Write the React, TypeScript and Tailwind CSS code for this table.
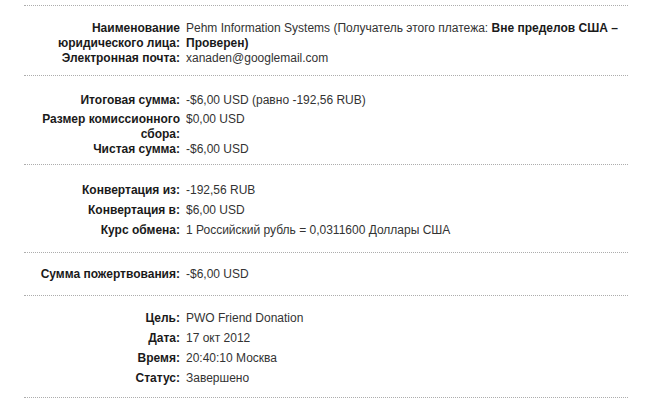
import React, { FC, ReactNode } from 'react';

type RowProps = {
  label: ReactNode;
  children: ReactNode;
  className?: string;
};

const Row: FC<RowProps> = ({ label, children, className = 'leading-[20px]' }) => (
  <div className={`flex ${className}`}>
    <div className="w-[156px] shrink-0 text-right font-bold text-[#1a1a1a]">{label}</div>
    <div className="flex-1 pl-[6px] text-[#333]">{children}</div>
  </div>
);

const App: FC = () => {
  return (
    <div
      className="min-h-[405px] bg-white pt-[5px] pl-[24px] text-[12px]"
      style={{ fontFamily: '"Liberation Sans", Arial, sans-serif' }}
    >
      <div className="w-[604px] border-b border-dotted border-[#adadad]">
        <section className="border-t border-dotted border-[#adadad] pt-[15px] pb-[9px]">
          <Row label="Наименование юридического лица:" className="leading-[15px]">
            Pehm Information Systems (Получатель этого платежа:{' '}
            <b className="text-[#1a1a1a]">Вне пределов США –</b> <b className="text-[#1a1a1a]">Проверен)</b>
          </Row>
          <Row label="Электронная почта:" className="leading-[15px]">
            xanaden@googlemail.com
          </Row>
        </section>

        <section className="border-t border-dotted border-[#adadad] pt-[14px] pb-[7px]">
          <Row label="Итоговая сумма:">-$6,00 USD (равно -192,56 RUB)</Row>
          <Row label="Размер комиссионного сбора:" className="leading-[15px] pt-[2px]">
            $0,00 USD
          </Row>
          <Row label="Чистая сумма:" className="leading-[15px]">
            -$6,00 USD
          </Row>
        </section>

        <section className="border-t border-dotted border-[#adadad] pt-[15px] pb-[12px]">
          <Row label="Конвертация из:">-192,56 RUB</Row>
          <Row label="Конвертация в:">$6,00 USD</Row>
          <Row label="Курс обмена:">1 Российский рубль = 0,0311600 Доллары США</Row>
        </section>

        <section className="border-t border-dotted border-[#adadad] pt-[11px] pb-[11px]">
          <Row label="Сумма пожертвования:">-$6,00 USD</Row>
        </section>

        <section className="border-t border-dotted border-[#adadad] pt-[12px] pb-[9px]">
          <Row label="Цель:">PWO Friend Donation</Row>
          <Row label="Дата:">17 окт 2012</Row>
          <Row label="Время:">20:40:10 Москва</Row>
          <Row label="Статус:">Завершено</Row>
        </section>
      </div>
    </div>
  );
};

export default App;
